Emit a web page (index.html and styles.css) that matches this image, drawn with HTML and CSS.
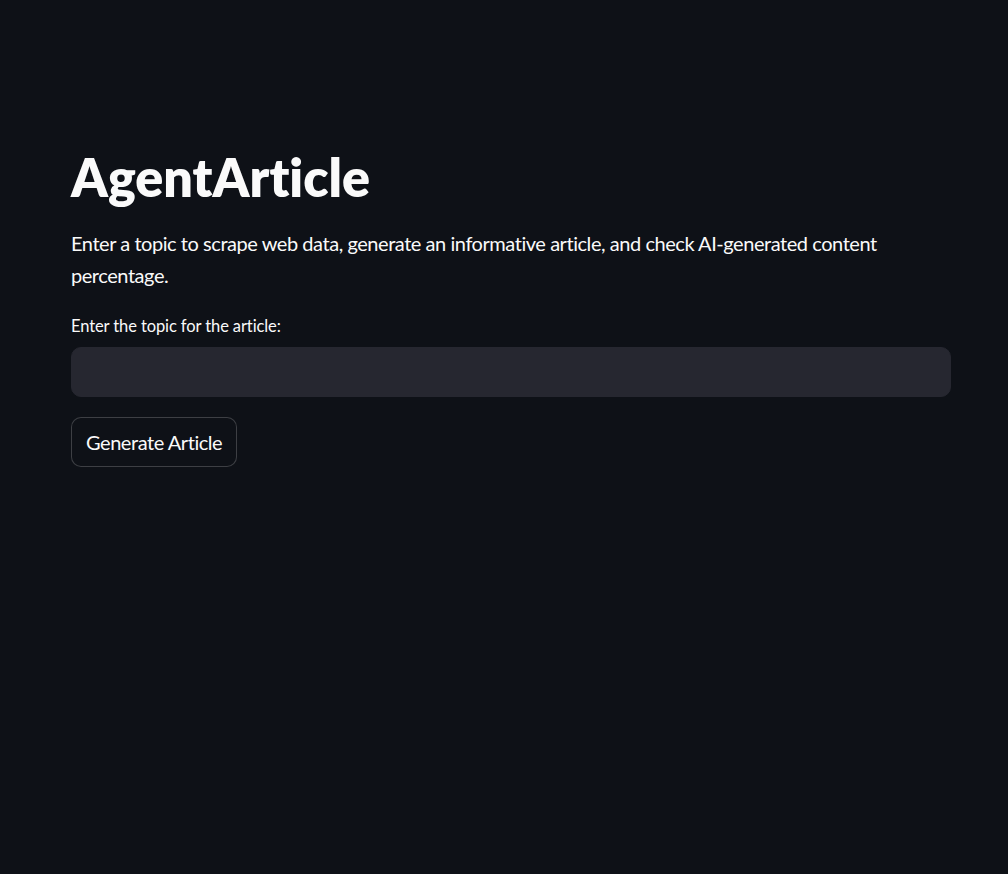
FILE: index.html
```html
<!DOCTYPE html>
<html>
<head>
<meta charset="utf-8">
<link rel="stylesheet" href="styles.css">
</head>
<body>
<main class="main">
  <div class="block">
    <h1 class="title">AgentArticle</h1>
    <p class="intro">Enter a topic to scrape web data, generate an informative article, and check AI-generated content percentage.</p>
    <div class="field">
      <label class="label" for="topic">Enter the topic for the article:</label>
      <input id="topic" class="input" type="text">
    </div>
    <div class="actions">
      <button class="btn" type="button">Generate Article</button>
    </div>
  </div>
</main>
</body>
</html>
```
FILE: styles.css
```css
html, body {
  margin: 0;
  padding: 0;
  background: #0e1117;
  color: #fafafa;
  font-family: Lato, "Liberation Sans", sans-serif;
  font-variant-ligatures: none;
  height: 100%;
}
.main {
  padding: 140px 57px 0 71px;
}
.block {
  width: 880px;
  display: flex;
  flex-direction: column;
}
.title {
  margin: 0;
  font-size: 52px;
  font-weight: 800;
  line-height: 74px;
  letter-spacing: 0;
}
.intro {
  margin: 13px 0 0 0;
  font-size: 20px;
  line-height: 32px;
  letter-spacing: -0.45px;
}
.field {
  margin-top: 24px;
  display: flex;
  flex-direction: column;
  gap: 10px;
}
.label {
  font-size: 16.5px;
  line-height: 22px;
  letter-spacing: -0.1px;
}
.input {
  box-sizing: border-box;
  height: 50px;
  width: 100%;
  background: #262730;
  border: 1px solid #262730;
  border-radius: 10px;
  color: #fafafa;
  font: inherit;
  padding: 0 16px;
  outline: none;
}
.actions {
  margin-top: 20px;
  display: flex;
}
.btn {
  box-sizing: border-box;
  height: 50px;
  padding: 0 14px;
  background: #0e1117;
  border: 1px solid rgba(250, 250, 250, 0.2);
  border-radius: 10px;
  color: #fafafa;
  font-family: inherit;
  font-variant-ligatures: none;
  font-size: 20px;
  letter-spacing: -0.45px;
}
```
